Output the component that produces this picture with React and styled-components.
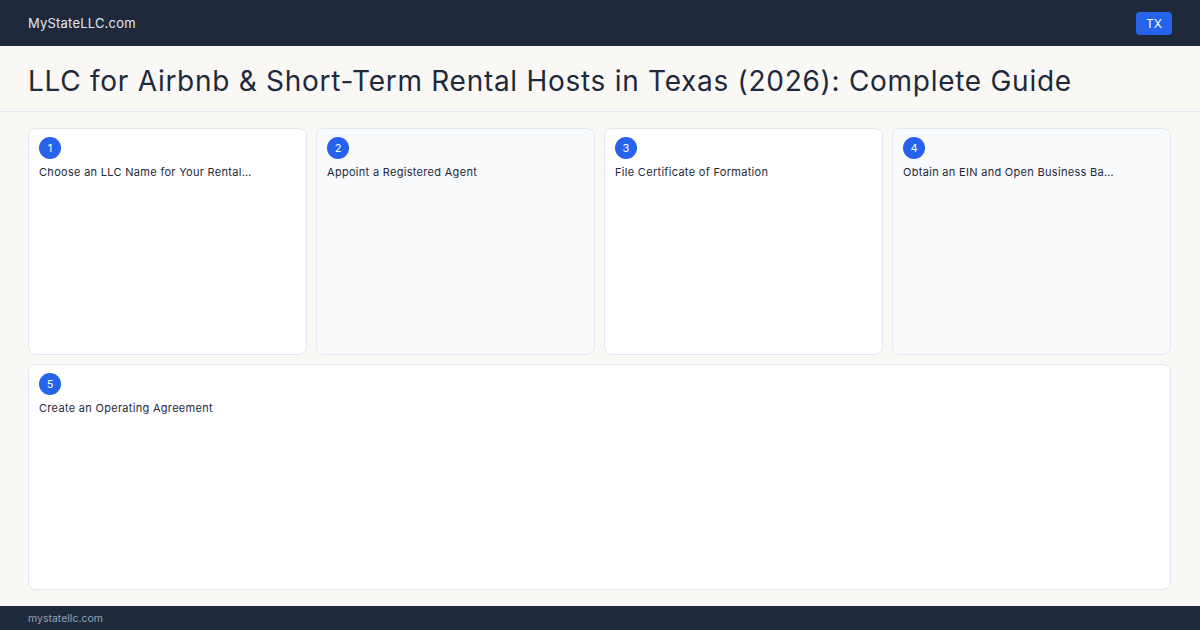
import React from 'react';
import styled, { createGlobalStyle } from 'styled-components';

const GlobalStyle = createGlobalStyle`
  *, *::before, *::after {
    box-sizing: border-box;
  }
  html, body {
    margin: 0;
    padding: 0;
    background: #f9f8f5;
  }
  body {
    font-family: Inter, "Noto Sans", "Liberation Sans", sans-serif;
    color: #1e293b;
  }
`;

const Page = styled.div`
  width: 1200px;
  height: 630px;
  display: flex;
  flex-direction: column;
  background: #f9f8f5;
  overflow: hidden;
`;

const TopBar = styled.header`
  height: 46px;
  flex: none;
  background: #1e293b;
  display: flex;
  align-items: center;
  justify-content: space-between;
  padding: 0 28px;
`;

const Brand = styled.div`
  color: #e2e8f0;
  font-size: 13px;
  letter-spacing: 0.2px;
`;

const StateBadge = styled.div`
  background: #2563eb;
  color: #ffffff;
  font-size: 12px;
  border-radius: 4px;
  height: 23px;
  padding: 0 10px;
  display: flex;
  align-items: center;
`;

const TitleBar = styled.div`
  height: 66px;
  flex: none;
  display: flex;
  align-items: center;
  padding: 4px 28px 0;
  border-bottom: 1px solid #e2e8f0;
`;

const Title = styled.h1`
  margin: 0;
  font-size: 28px;
  font-weight: 400;
  color: #1e293b;
  letter-spacing: 0.72px;
`;

const Steps = styled.main`
  flex: 1;
  display: grid;
  grid-template-columns: repeat(4, 1fr);
  grid-auto-rows: 1fr;
  gap: 9px 9px;
  padding: 16px 29px 16px 28px;
  min-height: 0;
`;

const Card = styled.div`
  grid-column: ${({ wide }) => (wide ? '1 / -1' : 'auto')};
  background: ${({ shaded }) => (shaded ? '#f8fafc' : '#ffffff')};
  border: 1px solid #e2e8f0;
  border-radius: 8px;
  padding: 8px 10px;
  display: flex;
  flex-direction: column;
  gap: 6px;
`;

const Num = styled.div`
  width: 22px;
  height: 22px;
  border-radius: 50%;
  background: #2563eb;
  color: #ffffff;
  font-size: 11px;
  display: flex;
  align-items: center;
  justify-content: center;
`;

const StepName = styled.div`
  font-size: 11px;
  letter-spacing: 0.3px;
  color: #1e293b;
  white-space: nowrap;
`;

const Footer = styled.footer`
  height: 24px;
  flex: none;
  background: #1e293b;
  display: flex;
  align-items: center;
  padding: 0 28px;
  color: #94a3b8;
  font-size: 10.5px;
`;

const steps = [
  'Choose an LLC Name for Your Rental…',
  'Appoint a Registered Agent',
  'File Certificate of Formation',
  'Obtain an EIN and Open Business Ba…',
  'Create an Operating Agreement',
];

export default function App() {
  return (
    <Page>
      <GlobalStyle />
      <TopBar>
        <Brand>MyStateLLC.com</Brand>
        <StateBadge>TX</StateBadge>
      </TopBar>
      <TitleBar>
        <Title>LLC for Airbnb &amp; Short-Term Rental Hosts in Texas (2026): Complete Guide</Title>
      </TitleBar>
      <Steps>
        {steps.map((s, i) => (
          <Card key={s} shaded={i % 2 === 1} wide={i === 4}>
            <Num>{i + 1}</Num>
            <StepName>{s}</StepName>
          </Card>
        ))}
      </Steps>
      <Footer>mystatellc.com</Footer>
    </Page>
  );
}
